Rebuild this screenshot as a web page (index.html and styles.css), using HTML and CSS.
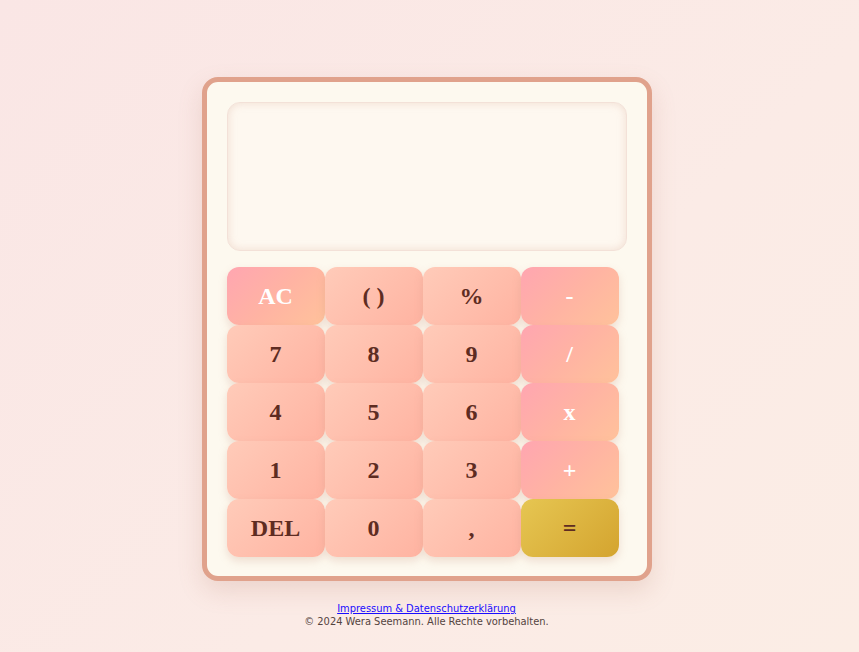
FILE: index.html
```html
<!DOCTYPE html>
<html lang="de">
<head>
<meta charset="utf-8">
<title>Taschenrechner</title>
<link rel="stylesheet" href="styles.css">
</head>
<body>
<main class="page">
  <div class="calc">
    <div class="display"></div>
    <div class="keys">
      <button class="key op">AC</button>
      <button class="key">( )</button>
      <button class="key">%</button>
      <button class="key op">-</button>
      <button class="key">7</button>
      <button class="key">8</button>
      <button class="key">9</button>
      <button class="key op">/</button>
      <button class="key">4</button>
      <button class="key">5</button>
      <button class="key">6</button>
      <button class="key op">x</button>
      <button class="key">1</button>
      <button class="key">2</button>
      <button class="key">3</button>
      <button class="key op">+</button>
      <button class="key">DEL</button>
      <button class="key">0</button>
      <button class="key">,</button>
      <button class="key eq">=</button>
    </div>
  </div>
  <footer class="footer">
    <a href="#" class="footer-link">Impressum &amp; Datenschutzerklärung</a>
    <div class="copy">© 2024 Wera Seemann. Alle Rechte vorbehalten.</div>
  </footer>
</main>
</body>
</html>
```
FILE: styles.css
```css
html, body {
  margin: 0;
  padding: 0;
  height: 100%;
}
body {
  background: linear-gradient(135deg, #fae6e5 0%, #fbebe6 60%, #fbede5 100%);
  font-family: "Liberation Serif", serif;
}
.page {
  display: flex;
  flex-direction: column;
  align-items: center;
  padding-top: 77px;
  padding-right: 6px;
}
.calc {
  box-sizing: border-box;
  width: 450px;
  border: 5px solid #e0a28c;
  border-radius: 16px;
  background: #fdf9ef;
  padding: 20px 20px 19px;
  box-shadow: 0 10px 25px rgba(170, 110, 90, 0.18);
  display: flex;
  flex-direction: column;
  gap: 16px;
}
.display {
  box-sizing: border-box;
  height: 149px;
  flex-shrink: 0;
  border-radius: 13px;
  background: #fef8f0;
  border: 1px solid #f3e1d8;
  box-shadow: inset 0 0 8px rgba(215, 170, 150, 0.35);
}
.keys {
  display: grid;
  grid-template-columns: repeat(4, 98px);
  grid-auto-rows: 58px;
}
.key {
  border: none;
  border-radius: 12px;
  font-family: "Liberation Serif", serif;
  font-weight: bold;
  font-size: 24px;
  color: #5e2c22;
  background: linear-gradient(135deg, #ffcbb9 0%, #ffb3a1 100%);
  box-shadow: 0 4px 8px rgba(200, 150, 130, 0.28);
  padding: 0;
  cursor: pointer;
}
.key.op {
  color: #ffffff;
  background: linear-gradient(135deg, #ffa6b1 0%, #ffb3a3 50%, #ffc29b 100%);
}
.key.eq {
  color: #5e2c22;
  background: linear-gradient(135deg, #e6c652 0%, #d4a42f 100%);
}
.footer {
  margin-top: 21px;
  text-align: center;
  font-family: "DejaVu Sans Condensed", "DejaVu Sans", sans-serif;
  font-stretch: condensed;
  font-size: 11px;
  line-height: 13px;
  color: #54443f;
}
.footer-link {
  color: #1a0dff;
}
```
